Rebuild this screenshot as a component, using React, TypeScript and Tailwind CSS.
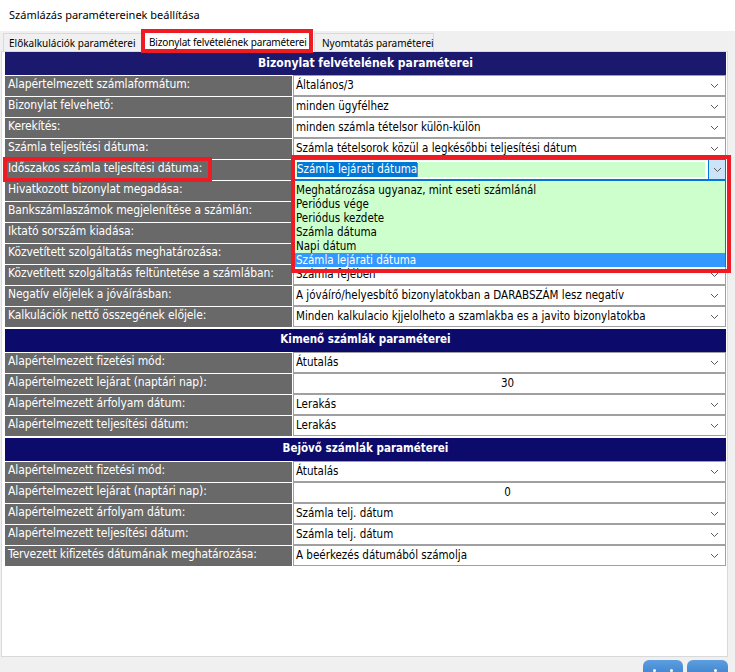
import React from 'react';

type Row = { label: string; value?: string; num?: boolean; combo?: boolean };

const mainRows: Row[] = [
  { label: 'Alapértelmezett számlaformátum:', value: 'Általános/3' },
  { label: 'Bizonylat felvehető:', value: 'minden ügyfélhez' },
  { label: 'Kerekítés:', value: 'minden számla tételsor külön-külön' },
  { label: 'Számla teljesítési dátuma:', value: 'Számla tételsorok közül a legkésőbbi teljesítési dátum' },
  { label: 'Időszakos számla teljesítési dátuma:', combo: true },
  { label: 'Hivatkozott bizonylat megadása:', value: '' },
  { label: 'Bankszámlaszámok megjelenítése a számlán:', value: '' },
  { label: 'Iktató sorszám kiadása:', value: '' },
  { label: 'Közvetített szolgáltatás meghatározása:', value: '' },
  { label: 'Közvetített szolgáltatás feltüntetése a számlában:', value: 'Számla fejében' },
  { label: 'Negatív előjelek a jóváírásban:', value: 'A jóváíró/helyesbítő bizonylatokban a DARABSZÁM lesz negatív' },
  { label: 'Kalkulációk nettő összegének előjele:', value: 'Minden kalkulacio kjjelolheto a szamlakba es a javito bizonylatokba' },
];

const outRows: Row[] = [
  { label: 'Alapértelmezett fizetési mód:', value: 'Átutalás' },
  { label: 'Alapértelmezett lejárat (naptári nap):', value: '30', num: true },
  { label: 'Alapértelmezett árfolyam dátum:', value: 'Lerakás' },
  { label: 'Alapértelmezett teljesítési dátum:', value: 'Lerakás' },
];

const inRows: Row[] = [
  { label: 'Alapértelmezett fizetési mód:', value: 'Átutalás' },
  { label: 'Alapértelmezett lejárat (naptári nap):', value: '0', num: true },
  { label: 'Alapértelmezett árfolyam dátum:', value: 'Számla telj. dátum' },
  { label: 'Alapértelmezett teljesítési dátum:', value: 'Számla telj. dátum' },
  { label: 'Tervezett kifizetés dátumának meghatározása:', value: 'A beérkezés dátumából számolja' },
];

const options = [
  'Meghatározása ugyanaz, mint eseti számlánál',
  'Periódus vége',
  'Periódus kezdete',
  'Számla dátuma',
  'Napi dátum',
  'Számla lejárati dátuma',
];

function Chevron() {
  return (
    <svg width="9" height="6" viewBox="0 0 9 6" className="shrink-0">
      <polyline points="1,1 4.5,4.5 8,1" fill="none" stroke="#5a5a5a" strokeWidth="1" />
    </svg>
  );
}

function Combo() {
  return (
    <div className="relative h-[21px] -mt-px border border-[#0078d7] bg-white flex">
      <div className="flex-1 m-[2px] mr-[3px] bg-[#ccffcc] flex items-center pl-px">
        <span className="bg-[#0078d7] text-white leading-[15px]">Számla lejárati dátuma</span>
        <span className="w-px h-[14px] bg-[#e07000]" />
      </div>
      <div className="w-[17px] border-l border-[#0078d7] bg-[#cce4f7] flex items-center justify-center">
        <Chevron />
      </div>
      <div className="absolute left-[-1px] right-[-1px] top-[20px] h-[87px] border border-[#0078d7] bg-[#ccffcc] z-10 pt-[2px]">
        {options.map((o, i) => (
          <div
            key={o}
            className={
              i === options.length - 1
                ? 'h-[14px] leading-[14px] pl-[2px] bg-[#3399ff] text-white'
                : 'h-[14px] leading-[14px] pl-[2px] text-black'
            }
          >
            {o}
          </div>
        ))}
      </div>
    </div>
  );
}

function Rows({ rows }: { rows: Row[] }) {
  return (
    <>
      {rows.map((r, i) => (
        <div key={i} className="flex gap-px h-[20px]">
          <div className="w-[287px] bg-[#696969] text-white text-[12px] tracking-[-0.1px] pl-[3px] leading-[16px] whitespace-nowrap overflow-hidden">
            {r.label}
          </div>
          <div className="flex-1 min-w-0 text-[11.5px]">
            {r.combo ? (
              <Combo />
            ) : (
              <div
                className={
                  'h-[21px] -mt-px border border-[#a0a0a0] bg-white flex items-center pl-[2px] pr-[6px] whitespace-nowrap text-black ' +
                  (r.num ? 'justify-center' : 'justify-between')
                }
              >
                <span>{r.value}</span>
                {!r.num && <Chevron />}
              </div>
            )}
          </div>
        </div>
      ))}
    </>
  );
}

function Header({ title, light }: { title: string; light?: boolean }) {
  return (
    <div
      className={
        'h-[23px] flex items-center justify-center text-white font-bold pb-[2px] ' +
        (light ? 'bg-[#1a196e] text-[12px]' : 'bg-[#0c0b6b] text-[11.5px]')
      }
    >
      {title}
    </div>
  );
}

export default function App() {
  return (
    <div className="relative w-[735px] h-[672px] bg-[#f0f0f0] overflow-hidden font-['Noto_Sans','Liberation_Sans',sans-serif] text-black">
      <div className="h-[31px] bg-white pl-[9px] flex items-center pb-[1px] text-[11px]">
        Számlázás paramétereinek beállítása
      </div>

      <div className="h-[20px] flex items-end pl-[3px] text-[10px]">
        <div className="h-[18px] w-[139px] border border-b-0 border-[#d9d9d9] bg-[#f0f0f0] pl-[5px] leading-[18px] whitespace-nowrap">
          Előkalkulációk paraméterei
        </div>
        <div className="relative z-10 h-[21px] w-[172px] -mb-px bg-white pl-[7px] leading-[22px] tracking-[-0.15px] whitespace-nowrap">
          Bizonylat felvételének paraméterei
        </div>
        <div className="h-[18px] w-[120px] border border-b-0 border-[#d9d9d9] bg-[#f0f0f0] pl-[7px] leading-[18px] whitespace-nowrap">
          Nyomtatás paraméterei
        </div>
      </div>

      <div className="ml-px w-[727px] h-[606px] bg-white border border-[#d9d9d9] pl-[3px]">
        <div className="w-[721px] flex flex-col gap-px font-['DejaVu_Sans_Condensed','DejaVu_Sans',sans-serif]">
          <Header title="Bizonylat felvételének paraméterei" light />
          <Rows rows={mainRows} />
          <div className="mt-px">
            <Header title="Kimenő számlák paraméterei" />
          </div>
          <Rows rows={outRows} />
          <div className="mt-px">
            <Header title="Bejövő számlák paraméterei" />
          </div>
          <Rows rows={inRows} />
        </div>
      </div>

      <div className="flex justify-end gap-[4px] pr-[7px] pt-[3px]">
        <div className="relative w-[40px] h-[24px] rounded-t-[6px] bg-gradient-to-b from-[#5c9ee0] to-[#2f74c0]">
          <span className="absolute left-[10px] top-[9px] w-[3px] h-[3px] rounded-full bg-white" />
          <span className="absolute left-[27px] top-[9px] w-[3px] h-[3px] rounded-full bg-white" />
        </div>
        <div className="relative w-[41px] h-[24px] rounded-t-[6px] bg-gradient-to-b from-[#5c9ee0] to-[#2f74c0]">
          <span className="absolute left-[27px] top-[9px] w-[3px] h-[3px] rounded-full bg-white" />
        </div>
      </div>

      {/* red annotation frames */}
      <div className="absolute left-[141px] top-[29px] w-[172px] h-[24px] border-4 border-[#ed1c24] z-20" />
      <div className="absolute left-[3px] top-[157px] w-[209px] h-[25px] border-4 border-[#ed1c24] z-20" />
      <div className="absolute left-[291px] top-[155px] w-[440px] h-[118px] border-4 border-[#ed1c24] z-20" />
    </div>
  );
}
